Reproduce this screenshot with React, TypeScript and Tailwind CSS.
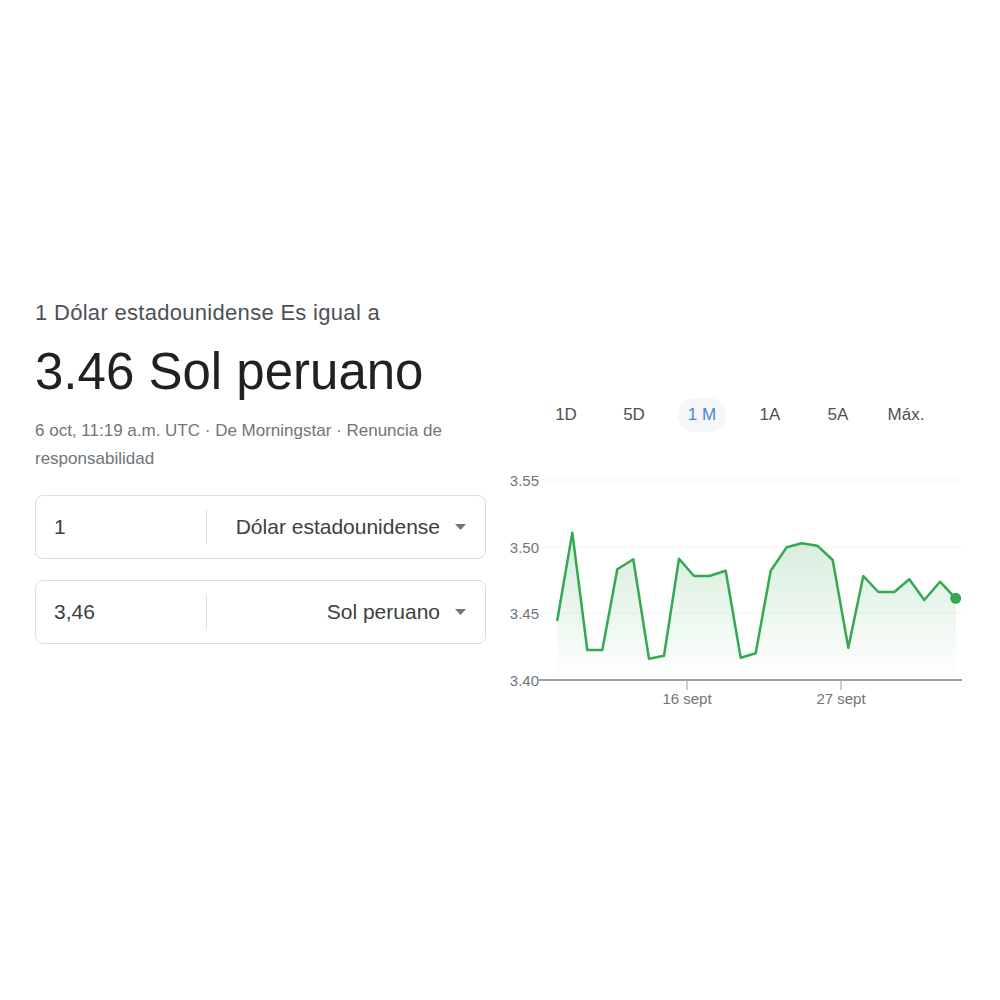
import React from "react";

const pts: [number, number][] = [
  [557.3, 620], [572.3, 532.7], [587.3, 650], [602.3, 650], [617.3, 569.3], [633.3, 559.3],
  [649, 658.7], [664, 655.7], [679, 558.7], [694, 576], [709.3, 576], [725.7, 570.7],
  [740.7, 657.7], [755.7, 653.3], [770.7, 570.7], [786.7, 547.3], [801.7, 543.3], [817.3, 545.7],
  [832.7, 560], [848.3, 647.7], [863.3, 576], [878.3, 592], [894.3, 592], [909.3, 579.3],
  [924.3, 600], [940, 581.7], [955.7, 598.3],
];

const FF = "'Liberation Sans', Arial, sans-serif";

function Chart() {
  const line = pts.map((p, i) => `${i === 0 ? "M" : "L"}${p[0]},${p[1]}`).join(" ");
  const area = `${line} L955.7,680 L557.3,680 Z`;
  const grid = [
    { y: 480, l: "3.55" },
    { y: 547, l: "3.50" },
    { y: 613, l: "3.45" },
  ];
  return (
    <svg width={470} height={250} viewBox="500 460 470 250" className="block">
      <defs>
        <linearGradient id="g" x1="0" y1="540" x2="0" y2="680" gradientUnits="userSpaceOnUse">
          <stop offset="0" stopColor="#34a853" stopOpacity="0.2" />
          <stop offset="1" stopColor="#34a853" stopOpacity="0" />
        </linearGradient>
      </defs>
      {grid.map((g) => (
        <g key={g.l}>
          <line x1={541} x2={962} y1={g.y} y2={g.y} stroke="#f1f3f4" strokeWidth={1} />
          <text x={539} y={g.y} textAnchor="end" dominantBaseline="central" fontSize={15} fill="#70757a" fontFamily={FF}>
            {g.l}
          </text>
        </g>
      ))}
      <text x={539} y={680} textAnchor="end" dominantBaseline="central" fontSize={15} fill="#70757a" fontFamily={FF}>
        3.40
      </text>
      <path d={area} fill="url(#g)" />
      <path d={line} fill="none" stroke="#34a853" strokeWidth={2.5} strokeLinejoin="round" strokeLinecap="round" />
      <circle cx={955.7} cy={598.3} r={5.5} fill="#34a853" />
      <line x1={539} x2={962} y1={680} y2={680} stroke="#9aa0a6" strokeWidth={2} />
      <line x1={687} x2={687} y1={680} y2={690} stroke="#9aa0a6" strokeWidth={1} />
      <line x1={841} x2={841} y1={680} y2={690} stroke="#9aa0a6" strokeWidth={1} />
      <text x={687} y={698} textAnchor="middle" dominantBaseline="central" fontSize={15} fill="#70757a" fontFamily={FF}>
        16 sept
      </text>
      <text x={841} y={698} textAnchor="middle" dominantBaseline="central" fontSize={15} fill="#70757a" fontFamily={FF}>
        27 sept
      </text>
    </svg>
  );
}

function Caret() {
  return (
    <svg width={11} height={6} viewBox="0 0 11 6" className="shrink-0">
      <path d="M0 0 L11 0 L5.5 6 Z" fill="#70757a" />
    </svg>
  );
}

function Box({ value, unit }: { value: string; unit: string }) {
  return (
    <div className="flex h-[64px] items-center rounded-[8px] border border-[#dadce0]">
      <div className="w-[170px] pl-[18px] text-[21px] text-[#3c4043]">{value}</div>
      <div className="h-[34px] w-px bg-[#dadce0]" />
      <div className="flex flex-1 items-center justify-end gap-[15px] pr-[19px] text-[21px] text-[#3c4043]">
        <span>{unit}</span>
        <Caret />
      </div>
    </div>
  );
}

export default function App() {
  const tabs = ["1D", "5D", "1 M", "1A", "5A", "Máx."];
  return (
    <div className="h-[1000px] w-[1000px] bg-white font-['Liberation_Sans',Arial,sans-serif]">
      <div className="flex pt-[300px] pl-[35px]">
        <div className="w-[451px]">
          <div className="text-[22px] leading-[26px] tracking-[0.3px] text-[#4d5156]">1 Dólar estadounidense Es igual a</div>
          <div className="mt-[16px] text-[51px] leading-[60px] text-[#202124]">3.46 Sol peruano</div>
          <div className="mt-[15px] text-[17px] leading-[28px] text-[#70757a]">
            6 oct, 11:19 a.m. UTC · De Morningstar · Renuncia de responsabilidad
          </div>
          <div className="mt-[22px] flex flex-col gap-[21px]">
            <Box value="1" unit="Dólar estadounidense" />
            <Box value="3,46" unit="Sol peruano" />
          </div>
        </div>
        <div className="ml-[14px] w-[470px] pt-[98px]">
          <div className="flex pl-[32px]">
            {tabs.map((t) => (
              <div key={t} className="flex h-[34px] w-[68px] items-center justify-center">
                <span
                  className={
                    t === "1 M"
                      ? "flex h-[34px] w-[48px] items-center justify-center rounded-full bg-[#f5f6f7] text-[17px] text-[#4a86d8]"
                      : "text-[17px] text-[#4d5156]"
                  }
                >
                  {t}
                </span>
              </div>
            ))}
          </div>
          <div className="mt-[28px]">
            <Chart />
          </div>
        </div>
      </div>
    </div>
  );
}
